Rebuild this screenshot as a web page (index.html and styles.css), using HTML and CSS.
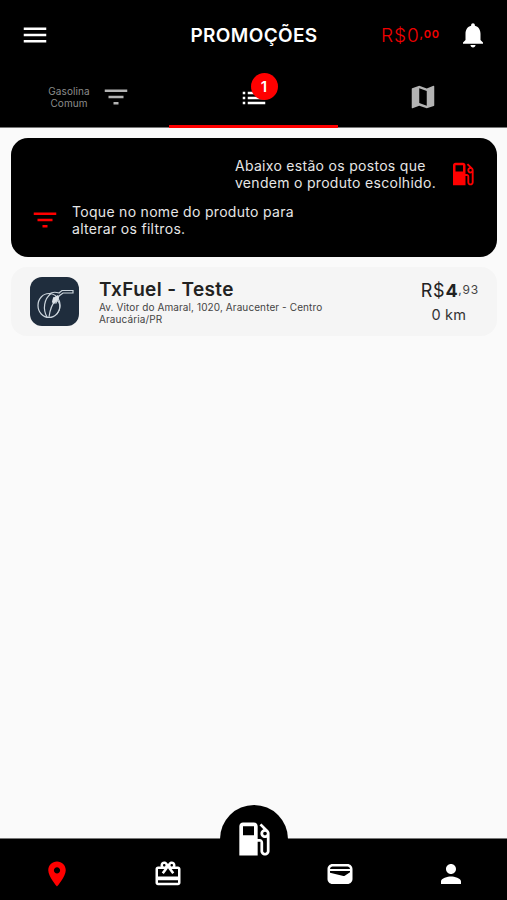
FILE: index.html
```html
<!DOCTYPE html>
<html lang="pt-BR">
<head>
    <meta charset="UTF-8">
    <meta name="viewport" content="width=device-width, initial-scale=1.0">
    <title>Promoções</title>
    <link rel="stylesheet" href="styles.css">
</head>
<body>

<!-- Header -->
<header class="header">
    <div class="topbar">
        <svg class="icon" viewBox="0 0 24 24"><path d="M3 18h18v-2H3v2zm0-5h18v-2H3v2zm0-7v2h18V6H3z"/></svg>
        <h1 class="title">PROMOÇÕES</h1>
        <div class="topbar-right">
            <span class="balance">R$0<span class="cents">,00</span></span>
            <svg class="icon" viewBox="0 0 24 24"><path d="M12 22c1.1 0 2-.9 2-2h-4c0 1.1.89 2 2 2zm6-6v-5c0-3.07-1.64-5.64-4.5-6.32V4c0-.83-.67-1.5-1.5-1.5s-1.5.67-1.5 1.5v.68C7.63 5.36 6 7.92 6 11v5l-2 2v1h16v-1l-2-2z"/></svg>
        </div>
    </div>

    <!-- Tabs -->
    <div class="tabs">
        <div class="tab tab-product">
            <span class="product">Gasolina<br>Comum</span>
            <svg class="icon" viewBox="0 0 24 24"><path d="M10 18h4v-2h-4v2zM3 6v2h18V6H3zm3 7h12v-2H6v2z"/></svg>
        </div>
        <div class="tab active">
            <div class="list-icon">
                <svg class="icon" viewBox="0 0 24 24"><path d="M3 13h2v-2H3v2zm0 4h2v-2H3v2zm0-8h2V7H3v2zm4 4h14v-2H7v2zm0 4h14v-2H7v2zM7 7v2h14V7H7z"/></svg>
                <span class="badge">1</span>
            </div>
        </div>
        <div class="tab">
            <svg class="icon" viewBox="0 0 24 24"><path d="M20.5 3l-.16.03L15 5.1 9 3 3.36 4.9c-.21.07-.36.25-.36.48V20.5c0 .28.22.5.5.5l.16-.03L9 18.9l6 2.1 5.64-1.9c.21-.07.36-.25.36-.48V3.5c0-.28-.22-.5-.5-.5zM15 19l-6-2.11V5l6 2.11V19z"/></svg>
        </div>
    </div>
</header>

<main class="content">
    <!-- Help -->
    <section class="help">
        <div class="help-row help-right">
            <p>Abaixo estão os postos que<br>vendem o produto escolhido.</p>
            <svg class="icon" viewBox="0 0 24 24"><path d="M19.77 7.23l.01-.01-3.72-3.72L15 4.56l2.11 2.11c-.94.36-1.61 1.26-1.61 2.33 0 1.38 1.12 2.5 2.5 2.5.36 0 .69-.08 1-.21v7.21c0 .55-.45 1-1 1s-1-.45-1-1V14c0-1.1-.9-2-2-2h-1V5c0-1.1-.9-2-2-2H6c-1.1 0-2 .9-2 2v16h10v-7.5h1.5v5c0 1.38 1.12 2.5 2.5 2.5s2.5-1.12 2.5-2.5V9c0-.69-.28-1.32-.73-1.77zM12 10H6V5h6v5zm6 0c-.55 0-1-.45-1-1s.45-1 1-1 1 .45 1 1-.45 1-1 1z"/></svg>
        </div>
        <div class="help-row">
            <svg class="icon" viewBox="0 0 24 24"><path d="M10 18h4v-2h-4v2zM3 6v2h18V6H3zm3 7h12v-2H6v2z"/></svg>
            <p>Toque no nome do produto para<br>alterar os filtros.</p>
        </div>
    </section>

    <!-- Station -->
    <section class="station">
        <div class="logo">
            <svg viewBox="0 0 49 49">
                <ellipse cx="19" cy="28.5" rx="11" ry="12"/>
                <path d="M21 16.500C14 22 12.500 32 17 40M19 40c1-8 3-13 7-17M26 22c5 4 5 10 1 15M19 17c3-2 7-2 10-1l3-2.500h11v2.500H33l-4 3-3 7-3-1 1-5"/>
                <path class="nozzle" d="M23 21l5-3 1 3-5 6-2-2z"/>
            </svg>
        </div>
        <div class="station-info">
            <h2>TxFuel - Teste</h2>
            <p>Av. Vitor do Amaral, 1020, Araucenter - Centro<br>Araucária/PR</p>
        </div>
        <div class="station-price">
            <div class="price">R$<b>4</b><span class="price-cents">,93</span></div>
            <div class="distance">0 km</div>
        </div>
    </section>
</main>

<!-- Bottom menu -->
<nav class="bottom">
    <svg class="icon selected" viewBox="0 0 24 24"><path d="M12 2C8.130 2 5 5.130 5 9c0 5.250 7 13 7 13s7-7.750 7-13c0-3.870-3.130-7-7-7zm0 9.500c-1.380 0-2.500-1.120-2.500-2.500s1.120-2.500 2.500-2.500 2.500 1.120 2.500 2.500-1.120 2.500-2.500 2.500z"/></svg>
    <svg class="icon" viewBox="0 0 24 24"><path d="M20 6h-2.180c.11-.31.18-.65.18-1 0-1.660-1.340-3-3-3-1.050 0-1.960.54-2.500 1.350l-.5.67-.5-.68C10.960 2.540 10.050 2 9 2 7.340 2 6 3.340 6 5c0 .35.07.69.18 1H4c-1.110 0-1.990.89-1.990 2L2 19c0 1.110.89 2 2 2h16c1.110 0 2-.89 2-2V8c0-1.110-.89-2-2-2zm-5-2c.55 0 1 .45 1 1s-.45 1-1 1-1-.45-1-1 .45-1 1-1zM9 4c.55 0 1 .45 1 1s-.45 1-1 1-1-.45-1-1 .45-1 1-1zm11 15H4v-2h16v2zm0-5H4V8h5.080L7 10.830 8.620 12 11 8.760l1-1.360 1 1.360L15.380 12 17 10.830 14.920 8H20v6z"/></svg>
    <div class="fuel-slot">
        <div class="fuel-button">
            <svg viewBox="0 0 24 24"><path d="M19.77 7.23l.01-.01-3.72-3.72L15 4.56l2.11 2.11c-.94.36-1.61 1.26-1.61 2.33 0 1.38 1.12 2.5 2.5 2.5.36 0 .69-.08 1-.21v7.21c0 .55-.45 1-1 1s-1-.45-1-1V14c0-1.1-.9-2-2-2h-1V5c0-1.1-.9-2-2-2H6c-1.1 0-2 .9-2 2v16h10v-7.5h1.5v5c0 1.38 1.12 2.5 2.5 2.5s2.5-1.12 2.5-2.5V9c0-.69-.28-1.32-.73-1.77zM12 10H6V5h6v5zm6 0c-.55 0-1-.45-1-1s.45-1 1-1 1 .45 1 1-.45 1-1 1z"/></svg>
        </div>
    </div>
    <svg class="icon" viewBox="0 0 24 24"><path fill-rule="evenodd" d="M6 4h12c2.200 0 4 1.800 4 4v8c0 2.200-1.800 4-4 4H6c-2.200 0-4-1.800-4-4V8c0-2.200 1.800-4 4-4zM4 7.900h16C19.800 6.700 19 6 18 6H6c-1 0-1.800.7-2 1.900zM4 11l10.700 2.500c.4.100.8 0 1.100-.2L20 10.600V9.500H4V11z"/></svg>
    <svg class="icon" viewBox="0 0 24 24"><path d="M12 12c2.210 0 4-1.790 4-4s-1.790-4-4-4-4 1.790-4 4 1.790 4 4 4zm0 2c-2.670 0-8 1.340-8 4v2h16v-2c0-2.660-5.330-4-8-4z"/></svg>
</nav>

</body>
</html>
```
FILE: styles.css
```css
* {
    box-sizing: border-box;
}
body {
    font-family: 'Inter', sans-serif;
    background-color: #fafafa;
    margin: 0;
    height: 900px;
    display: flex;
    flex-direction: column;
    overflow: hidden;
}
h1, h2, p {
    margin: 0;
}
.icon {
    display: block;
    width: 30px;
    height: 30px;
    fill: currentColor;
    flex-shrink: 0;
}
.header {
    background-color: #000;
    color: #fff;
    height: 128px;
    border-bottom: 1px solid #777;
}
.topbar {
    height: 70px;
    padding: 0 19px 0 20px;
    display: grid;
    grid-template-columns: 1fr auto 1fr;
    align-items: center;
}
.title {
    font-size: 19px;
    font-weight: 600;
    letter-spacing: 0.35px;
}
.topbar-right {
    display: flex;
    justify-content: flex-end;
    align-items: center;
    gap: 18px;
}
.balance {
    color: #f00000;
    font-size: 19px;
    font-weight: 300;
    letter-spacing: 0.9px;
}
.cents {
    font-size: 11px;
    font-weight: 600;
    vertical-align: 4px;
}
.tabs {
    height: 58px;
    display: grid;
    grid-template-columns: repeat(3, 1fr);
}
.tab {
    display: flex;
    justify-content: center;
    align-items: center;
    color: #b3b3b3;
    padding-bottom: 4px;
}
.tab-product {
    gap: 11px;
    padding-left: 10px;
}
.product {
    font-size: 10px;
    line-height: 12.5px;
    letter-spacing: 0.1px;
    text-align: center;
    color: #8c8c8c;
}
.active {
    color: #fff;
    border-bottom: 3px solid #f00;
    padding-bottom: 0;
}
.list-icon {
    position: relative;
}
.badge {
    position: absolute;
    left: 12px;
    top: -10px;
    width: 27px;
    height: 27px;
    border-radius: 50%;
    background-color: #f00;
    font-size: 15px;
    font-weight: 600;
    line-height: 27px;
    text-align: center;
}
.content {
    flex: 1;
    padding: 10px 10px 0 11px;
}
.help {
    height: 119px;
    background-color: #000;
    border-radius: 17px;
    padding: 19px 19px 0;
    color: #e6e6e6;
    font-size: 14px;
    line-height: 17px;
    letter-spacing: 0.3px;
}
.help-row {
    display: flex;
    align-items: center;
    gap: 12px;
    margin-bottom: 12px;
}
.help-right {
    justify-content: flex-end;
}
.help .icon {
    color: #f00;
}
.station {
    height: 69px;
    margin-top: 10px;
    padding: 0 18px 0 19px;
    background-color: #f5f5f5;
    border-radius: 16px;
    display: flex;
    align-items: center;
    color: #222;
}
.logo {
    width: 49px;
    height: 49px;
    border-radius: 12px;
    background-color: #1f2d3d;
}
.logo svg {
    display: block;
    fill: none;
    stroke: #ccd5dc;
    stroke-width: 1.2;
}
.logo .nozzle {
    fill: #dde3e8;
    stroke: none;
}
.station-info {
    flex: 1;
    margin-left: 20px;
}
.station-info h2 {
    font-size: 19px;
    font-weight: 600;
    line-height: 23px;
    letter-spacing: 0.35px;
}
.station-info p {
    font-size: 10px;
    line-height: 12.5px;
    letter-spacing: 0.1px;
    color: #444;
}
.station-price {
    text-align: center;
}
.price {
    font-size: 18px;
    line-height: 25px;
    letter-spacing: 0.8px;
}
.price-cents {
    font-size: 12px;
    vertical-align: 3px;
    line-height: 1;
    color: #444;
}
.distance {
    font-size: 14.5px;
    line-height: 23px;
    letter-spacing: 0.2px;
    padding-right: 2px;
    color: #333;
}
.bottom {
    height: 62px;
    border-top: 1px solid #777;
    background-color: #000;
    color: #fff;
    display: grid;
    grid-template-columns: 114px 108px 64px 108px 1fr;
    justify-items: center;
    align-items: center;
    padding-top: 9px;
}
.selected {
    color: #f00;
}
.fuel-slot {
    position: relative;
    width: 64px;
    height: 50px;
}
/* rises above the bar */
.fuel-button {
    position: absolute;
    left: -2px;
    top: -44px;
    width: 68px;
    height: 68px;
    border-radius: 50%;
    background-color: #000;
}
.fuel-button svg {
    display: block;
    width: 44px;
    height: 44px;
    margin: 12px;
    fill: #fff;
}
```
